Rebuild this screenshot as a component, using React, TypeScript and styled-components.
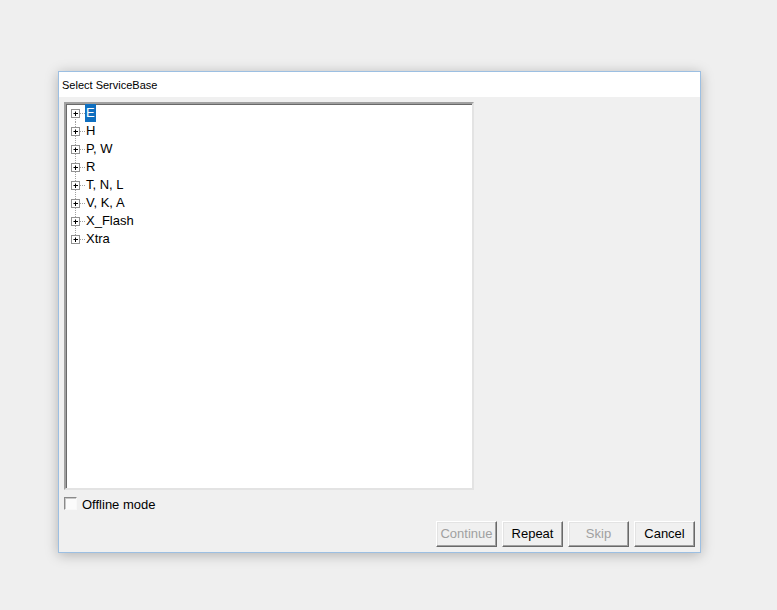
import React, {useState} from "react";
import styled, {createGlobalStyle} from "styled-components";

const nodes = ["E", "H", "P, W", "R", "T, N, L", "V, K, A", "X_Flash", "Xtra"];

interface ConnectorProps {
    first: boolean;
    last: boolean;
}

function Connector(props: ConnectorProps) {
    const {first, last} = props;
    return (
        <ConnectorSvg width={19} height={18} viewBox={"0 0 19 18"}>
            <line
                x1={9.5}
                x2={9.5}
                y1={first ? 9 : 0}
                y2={last ? 9 : 18}
                stroke={"#a0a0a0"}
                strokeWidth={1}
                strokeDasharray={"1 1"}
            />
            <line x1={14} x2={19} y1={9.5} y2={9.5} stroke={"#a0a0a0"} strokeWidth={1} strokeDasharray={"1 1"}/>
            <rect x={5.5} y={5.5} width={8} height={8} fill={"#ffffff"} stroke={"#919191"} strokeWidth={1}/>
            <line x1={7.5} x2={12} y1={9.5} y2={9.5} stroke={"#000000"} strokeWidth={1}/>
            <line x1={9.5} x2={9.5} y1={7.5} y2={12} stroke={"#000000"} strokeWidth={1}/>
        </ConnectorSvg>
    );
}

function App() {
    const [selected, setSelected] = useState("E");
    const [offline, setOffline] = useState(false);

    return (
        <Page>
            <GlobalStyle/>
            <Dialog>
                <TitleBar>{"Select ServiceBase"}</TitleBar>
                <Body>
                    <TreeBox>
                        {nodes.map((n, i) =>
                            <TreeRow key={n} onClick={() => setSelected(n)}>
                                <Connector first={i === 0} last={i === nodes.length - 1}/>
                                <NodeLabel selected={selected === n}>{n}</NodeLabel>
                            </TreeRow>)}
                    </TreeBox>
                    <CheckRow onClick={() => setOffline(!offline)}>
                        <CheckBox>{offline ? "✓" : ""}</CheckBox>
                        <CheckLabel>{"Offline mode"}</CheckLabel>
                    </CheckRow>
                    <ButtonBar>
                        <DialogButton disabled>{"Continue"}</DialogButton>
                        <DialogButton>{"Repeat"}</DialogButton>
                        <DialogButton disabled>{"Skip"}</DialogButton>
                        <DialogButton>{"Cancel"}</DialogButton>
                    </ButtonBar>
                </Body>
            </Dialog>
        </Page>
    );
}

/**
 * Styled Components
 */
const GlobalStyle = createGlobalStyle`
    html, body {
        margin: 0;
        padding: 0;
        background: #efefef;
        font-family: "Liberation Sans", Arial, sans-serif;
    }
`;

const Page = styled("div")`
    width: 777px;
    height: 610px;
    padding: 71px 0 0 58px;
    box-sizing: border-box;
    background: #efefef;
`;

const Dialog = styled("div")`
    width: 643px;
    height: 482px;
    box-sizing: border-box;
    border: 1px solid #9cbfe2;
    background: #f0f0f0;
    box-shadow: 0 2px 12px rgba(0, 0, 0, 0.26);
    display: flex;
    flex-direction: column;
`;

const TitleBar = styled("div")`
    height: 25px;
    background: #ffffff;
    padding-left: 3px;
    display: flex;
    align-items: center;
    font-size: 11px;
    color: #000;
`;

const Body = styled("div")`
    flex-grow: 1;
    padding: 5px 5px 0 5px;
    display: flex;
    flex-direction: column;
`;

const TreeBox = styled("div")`
    width: 410px;
    height: 388px;
    box-sizing: border-box;
    background: #ffffff;
    border-style: solid;
    border-width: 2px;
    border-color: #a0a0a0 #e3e3e3 #e3e3e3 #a0a0a0;
    box-shadow: inset 1px 1px 0 #696969;
    display: flex;
    flex-direction: column;
`;

const TreeRow = styled("div")`
    display: flex;
    flex-direction: row;
    align-items: center;
    height: 18px;
    cursor: default;
`;

const ConnectorSvg = styled("svg")`
    display: block;
    flex-shrink: 0;
`;

const NodeLabel = styled("span")<{selected: boolean}>`
    font-size: 13px;
    line-height: 18px;
    padding: 0 1px;
    color: ${p => p.selected ? "#ffffff" : "#000000"};
    background: ${p => p.selected ? "#0f6fbf" : "transparent"};
`;

const CheckRow = styled("div")`
    display: flex;
    flex-direction: row;
    align-items: center;
    gap: 5px;
    margin-top: 7px;
    height: 13px;
`;

const CheckBox = styled("div")`
    width: 13px;
    height: 13px;
    box-sizing: border-box;
    border-style: solid;
    border-width: 1px;
    border-color: #8a8a8a #f8f8f8 #f8f8f8 #8a8a8a;
    box-shadow: inset 1px 1px 0 #c8c8c8;
    background: #fbfbfb;
    font-size: 10px;
    line-height: 11px;
    text-align: center;
`;

const CheckLabel = styled("span")`
    font-size: 13px;
    line-height: 15px;
    padding-top: 1px;
    color: #000;
`;

const ButtonBar = styled("div")`
    display: flex;
    flex-direction: row;
    justify-content: flex-end;
    gap: 5px;
    margin-top: 11px;
`;

const DialogButton = styled("button")`
    width: 61px;
    height: 26px;
    box-sizing: border-box;
    padding: 0 0 1px 0;
    font-family: "Liberation Sans", Arial, sans-serif;
    font-size: 13px;
    color: ${p => p.disabled ? "#a0a0a0" : "#000000"};
    background: #f0f0f0;
    border-style: solid;
    border-width: 1px;
    border-color: #ffffff #696969 #696969 #ffffff;
    box-shadow: inset -1px -1px 0 #a0a0a0, inset 1px 1px 0 #e3e3e3;
`;

export default App;
